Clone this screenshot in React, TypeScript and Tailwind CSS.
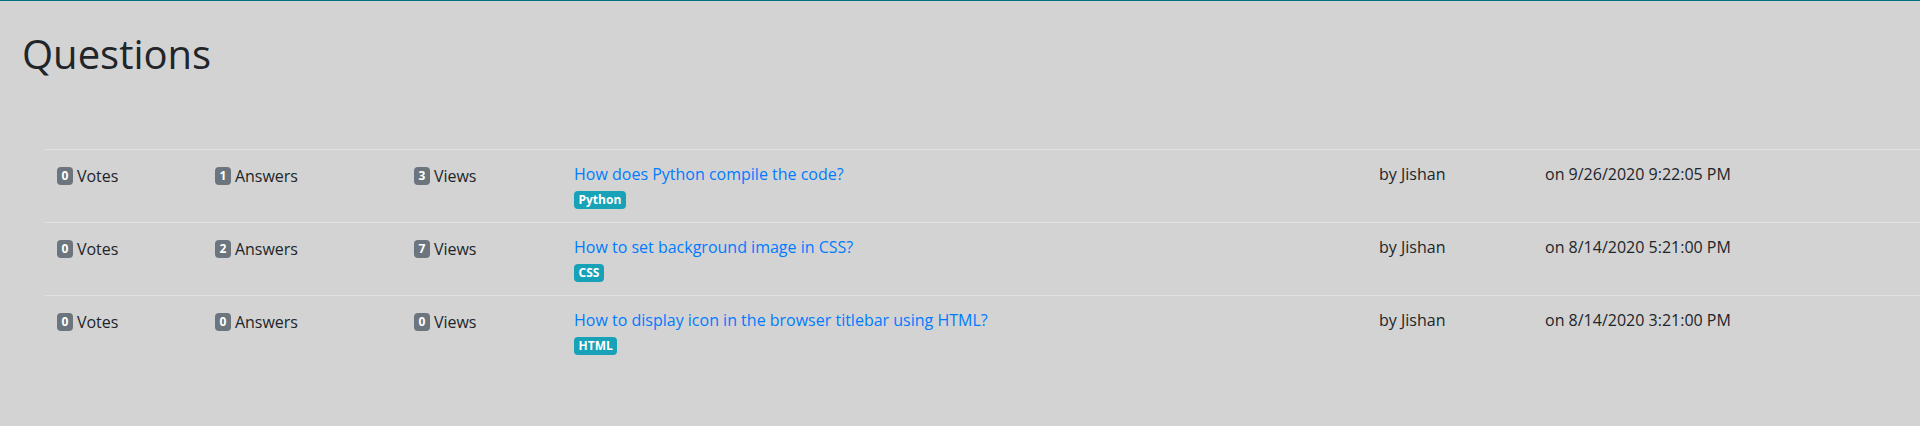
type Question = {
  id: number
  votes: number
  answers: number
  views: number
  title: string
  tag: string
  author: string
  date: string
}

const QUESTIONS: Question[] = [
  {
    id: 1,
    votes: 0,
    answers: 1,
    views: 3,
    title: "How does Python compile the code?",
    tag: "Python",
    author: "Jishan",
    date: "9/26/2020 9:22:05 PM",
  },
  {
    id: 2,
    votes: 0,
    answers: 2,
    views: 7,
    title: "How to set background image in CSS?",
    tag: "CSS",
    author: "Jishan",
    date: "8/14/2020 5:21:00 PM",
  },
  {
    id: 3,
    votes: 0,
    answers: 0,
    views: 0,
    title: "How to display icon in the browser titlebar using HTML?",
    tag: "HTML",
    author: "Jishan",
    date: "8/14/2020 3:21:00 PM",
  },
]

function Count({ n, label }: { n: number; label: string }) {
  return (
    <span className="inline-flex items-center">
      <span className="inline-flex h-[18px] items-center rounded-[4px] bg-[#6c757d] px-[4.5px] text-[12px] font-bold leading-none text-white">
        {n}
      </span>
      <span className="ml-[4px]">{label}</span>
    </span>
  )
}

export default function App() {
  return (
    <div className="min-h-screen border-t border-[#016f7e] bg-[#d3d3d3] font-['Open_Sans',sans-serif] text-[16px] leading-6 text-[#212529]">
      <div className="px-[22px] pt-[29px]">
        <h1 className="text-[40px] font-medium leading-[1.2]">Questions</h1>
      </div>

      <div className="ml-[45px] mt-[71px]">
        {QUESTIONS.map((q) => (
          <div key={q.id} className="flex border-t border-[#dee2e6]">
            <div className="w-[158px] shrink-0 p-3">
              <Count n={q.votes} label="Votes" />
            </div>
            <div className="w-[199px] shrink-0 p-3">
              <Count n={q.answers} label="Answers" />
            </div>
            <div className="w-[160px] shrink-0 p-3">
              <Count n={q.views} label="Views" />
            </div>
            <div className="w-[805px] shrink-0 p-3">
              <a href="#" className="block text-[#007bff]">
                {q.title}
              </a>
              <span className="mt-[5px] mb-[1px] inline-flex h-[18px] items-center rounded-[4px] bg-[#17a2b8] px-[4.5px] text-[12px] font-bold leading-none text-white">
                {q.tag}
              </span>
            </div>
            <div className="w-[166px] shrink-0 p-3">by {q.author}</div>
            <div className="flex-1 p-3">on {q.date}</div>
          </div>
        ))}
      </div>
    </div>
  )
}
